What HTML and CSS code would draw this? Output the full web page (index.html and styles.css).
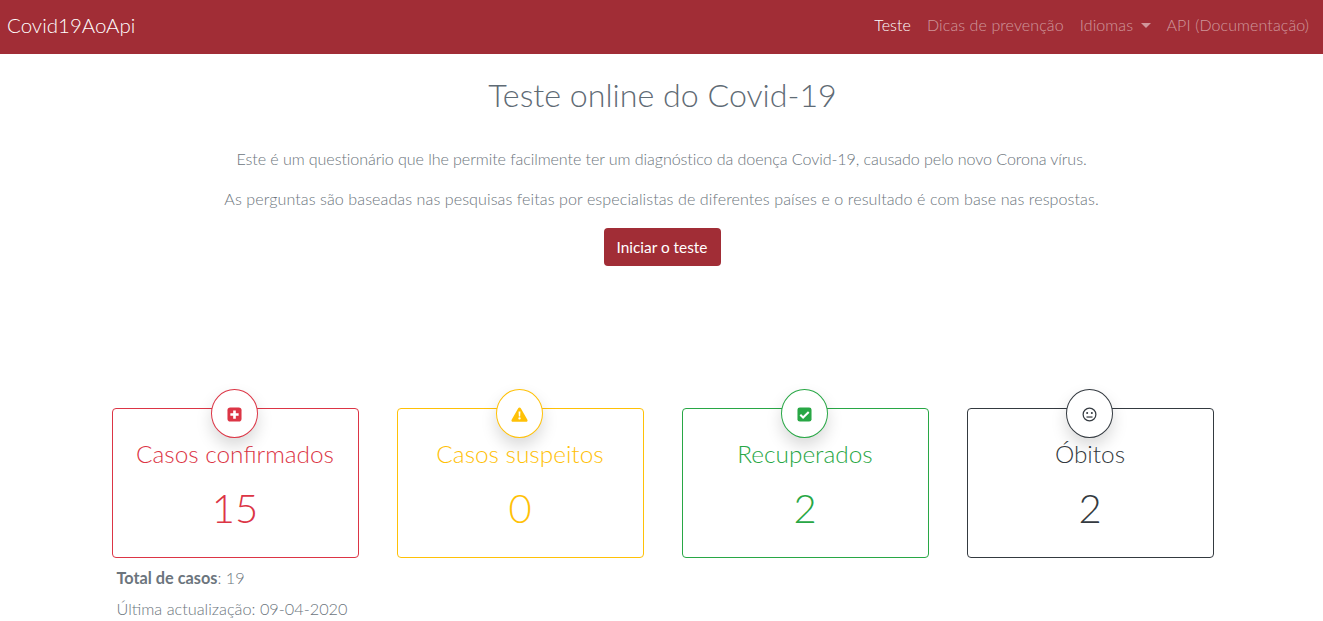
FILE: index.html
```html
<!DOCTYPE html>
<html lang="pt">
<head>
    <meta charset="UTF-8">
    <meta name="viewport" content="width=device-width, initial-scale=1.0">
    <title>Covid19AoApi</title>
    <link rel="stylesheet" href="styles.css">
</head>
<body>
    <nav class="navbar">
        <a class="brand" href="#">Covid19AoApi</a>
        <ul class="nav-links">
            <li><a class="nav-link active" href="#">Teste</a></li>
            <li><a class="nav-link" href="#">Dicas de prevenção</a></li>
            <li><a class="nav-link" href="#">Idiomas <span class="caret"></span></a></li>
            <li><a class="nav-link" href="#">API (Documentação)</a></li>
        </ul>
    </nav>

    <section class="intro">
        <h1>Teste online do Covid-19</h1>
        <p class="lead-a">Este é um questionário que lhe permite facilmente ter um diagnóstico da doença Covid-19, causado pelo novo Corona vírus.</p>
        <p class="lead-b">As perguntas são baseadas nas pesquisas feitas por especialistas de diferentes países e o resultado é com base nas respostas.</p>
        <a class="btn" href="#">Iniciar o teste</a>
    </section>

    <section class="stats">
        <div class="cards">
            <div class="card red">
                <span class="badge">
                    <svg viewBox="0 0 16 16" width="15" height="15"><rect x="0.5" y="0.5" width="15" height="15" rx="3" fill="currentColor"/><path d="M6.6 3.6h2.8v3h3v2.8h-3v3H6.6v-3h-3V6.6h3z" fill="#fff"/></svg>
                </span>
                <h2>Casos confirmados</h2>
                <div class="num">15</div>
            </div>
            <div class="card yellow">
                <span class="badge">
                    <svg viewBox="0 0 18 16" width="17" height="15"><path d="M9 .6c.6 0 1.100.3 1.400.8l7 12.100c.6 1-.2 2.300-1.400 2.300H2c-1.200 0-2-1.300-1.400-2.300l7-12.100C7.900.9 8.400.6 9 .6z" fill="currentColor"/><path d="M8 4.800h2l-.3 5.200H8.300z M9 10.800a1.300 1.300 0 1 1 0 2.600 1.300 1.300 0 0 1 0-2.600z" fill="#fff"/></svg>
                </span>
                <h2>Casos suspeitos</h2>
                <div class="num">0</div>
            </div>
            <div class="card green">
                <span class="badge">
                    <svg viewBox="0 0 16 16" width="15" height="15"><rect x="0.5" y="0.5" width="15" height="15" rx="2.500" fill="currentColor"/><path d="M3.500 8.300l3 3 6-6" fill="none" stroke="#fff" stroke-width="2.200"/></svg>
                </span>
                <h2>Recuperados</h2>
                <div class="num">2</div>
            </div>
            <div class="card dark">
                <span class="badge">
                    <svg viewBox="0 0 16 16" width="15" height="15"><circle cx="8" cy="8" r="6.800" fill="none" stroke="currentColor" stroke-width="1.300"/><circle cx="5.500" cy="6.300" r="1.100" fill="currentColor"/><circle cx="10.500" cy="6.300" r="1.100" fill="currentColor"/><path d="M4.800 10.700h6.400" stroke="currentColor" stroke-width="1.300"/></svg>
                </span>
                <h2>Óbitos</h2>
                <div class="num">2</div>
            </div>
        </div>
        <p class="total"><b>Total de casos</b>: 19</p>
        <p class="updated">Última actualização: 09-04-2020</p>
    </section>
</body>
</html>
```

FILE: styles.css
```css
* {
    box-sizing: border-box;
}
html {
    overflow: hidden;
}
body {
    margin: 0;
    font-family: Lato, "Noto Sans", sans-serif;
    font-weight: 300;
    font-size: 16.300px;
    color: #6c757d;
    background: #fff;
}
a {
    text-decoration: none;
}
/* barra de topo */
.navbar {
    height: 54px;
    background: #a12d36;
    display: flex;
    align-items: center;
    justify-content: space-between;
    padding: 0 6px 5px 7px;
}
.brand {
    color: #fff;
    font-size: 20.500px;
}
.nav-links {
    display: flex;
    list-style: none;
    margin: 0;
    padding: 0;
}
.nav-link {
    display: block;
    padding: 0 8px;
    font-size: 16px;
    letter-spacing: .1px;
    color: rgba(255, 255, 255, .5);
}
.nav-link.active {
    color: #fff;
}
.caret {
    display: inline-block;
    margin-left: 3px;
    vertical-align: 3px;
    border-top: 5px solid;
    border-left: 5px solid transparent;
    border-right: 5px solid transparent;
}
.intro {
    text-align: center;
    padding-top: 20px;
}
.intro h1 {
    margin: 0 0 31px;
    padding-left: 2px;
    font-size: 32.200px;
    font-weight: 300;
    line-height: 42px;
    color: #5f6b75;
}
.intro p {
    margin: 0 0 16px;
    line-height: 24px;
    font-size: 16.100px;
}
.intro .lead-a {
    letter-spacing: -.08px;
}
.intro .lead-b {
    margin-bottom: 17px;
    letter-spacing: .08px;
}
.btn {
    display: inline-block;
    margin-left: 1px;
    width: 117px;
    height: 38px;
    line-height: 38px;
    border-radius: 4px;
    background: #a12d36;
    color: #fff;
    font-weight: 400;
    font-size: 15.400px;
}
.stats {
    width: 1140px;
    margin: 142px auto 0;
    padding-left: 20px;
}
.cards {
    display: grid;
    grid-template-columns: repeat(4, 247px);
    gap: 38px;
}
.card {
    position: relative;
    height: 150px;
    border: 1px solid currentColor;
    border-radius: 4px;
    text-align: center;
    padding-top: 29px;
}
.card h2 {
    margin: 0;
    font-size: 24.400px;
    font-weight: 300;
    line-height: 32px;
}
.num {
    margin-top: 8px;
    font-size: 40px;
    line-height: 60px;
}
/* circulo com o icone por cima da borda */
.badge {
    position: absolute;
    top: -20px;
    left: 98px;
    width: 47px;
    height: 49px;
    padding-top: 1px;
    border: 1px solid currentColor;
    border-radius: 50%;
    background: #fff;
    box-shadow: 0 8px 16px rgba(0, 0, 0, .15);
    display: flex;
    align-items: center;
    justify-content: center;
}
.red {
    color: #dc3545;
}
.yellow {
    color: #ffc107;
}
.green {
    color: #28a745;
}
.dark {
    color: #343a40;
}
.total,
.updated {
    margin: 0;
    padding-left: 5px;
    line-height: 24px;
}
.total {
    margin-top: 8px;
    margin-bottom: 7px;
}
.total b {
    font-weight: 700;
}
```
